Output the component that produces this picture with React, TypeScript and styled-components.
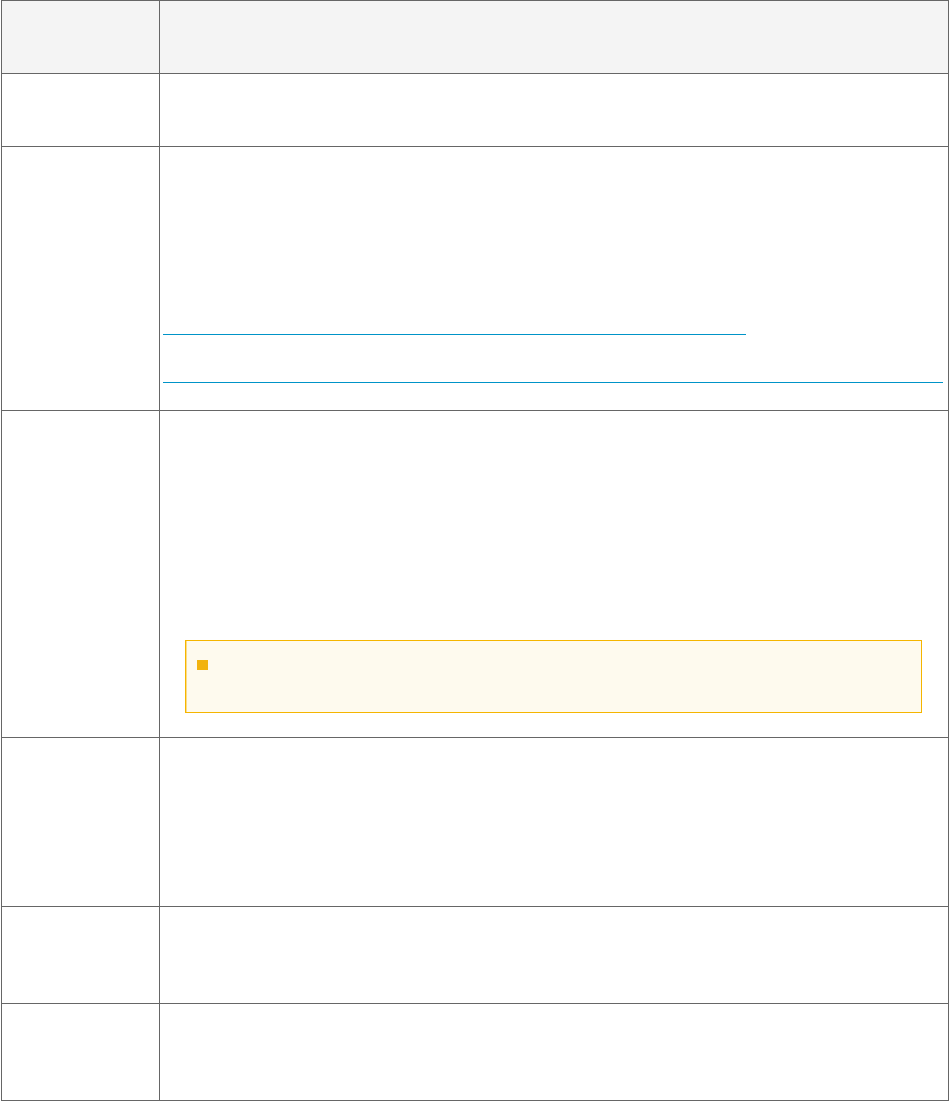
import React from "react";
import styled, { createGlobalStyle } from "styled-components";

const Global = createGlobalStyle`
  html, body { margin: 0; padding: 0; background: #ffffff; }
  body { font-family: "Open Sans", "Liberation Sans", sans-serif; font-size: 14px; color: #333; }
`;

const Frame = styled.div`
  box-sizing: border-box;
  width: 948px;
  margin-left: 1px;
  border-top: 1px solid #666666;
  border-left: 1px solid #666666;
`;

const Row = styled.div<{ $h: number; $head?: boolean }>`
  display: grid;
  grid-template-columns: 158px 789px;
  height: ${(p) => p.$h}px;
  background: ${(p) => (p.$head ? "#f4f4f4" : "#ffffff")};
`;

const Cell = styled.div`
  box-sizing: border-box;
  border-right: 1px solid #666666;
  border-bottom: 1px solid #666666;
`;

const LinkBlock = styled.div`
  display: flex;
  flex-direction: column;
  gap: 47px;
  padding: 187px 0 0 3px;
`;

const LinkLine = styled.span<{ $w: number }>`
  display: block;
  width: ${(p) => p.$w}px;
  height: 1px;
  background-color: #0094c8;
`;

const NoteWrap = styled.div`
  padding: 229px 0 0 25px;
`;

const Note = styled.div`
  box-sizing: border-box;
  width: 737px;
  height: 73px;
  background: #fefaee;
  border: 1px solid #f5b500;
  box-shadow: inset 1px 0 0 #fcdc86;
  padding: 19px 0 0 11px;
`;

const NoteMark = styled.span`
  display: block;
  width: 11px;
  height: 10px;
  background: #f2b30f;
`;

const rows = [73, 73, 264, 327, 169, 97, 97];

export default function App() {
  return (
    <>
      <Global />
      <Frame>
        {rows.map((h, i) => (
          <Row key={i} $h={h} $head={i === 0}>
            <Cell />
            <Cell>
              {i === 2 && (
                <LinkBlock>
                  <LinkLine $w={583} />
                  <LinkLine $w={780} />
                </LinkBlock>
              )}
              {i === 3 && (
                <NoteWrap>
                  <Note>
                    <NoteMark />
                  </Note>
                </NoteWrap>
              )}
            </Cell>
          </Row>
        ))}
      </Frame>
    </>
  );
}
